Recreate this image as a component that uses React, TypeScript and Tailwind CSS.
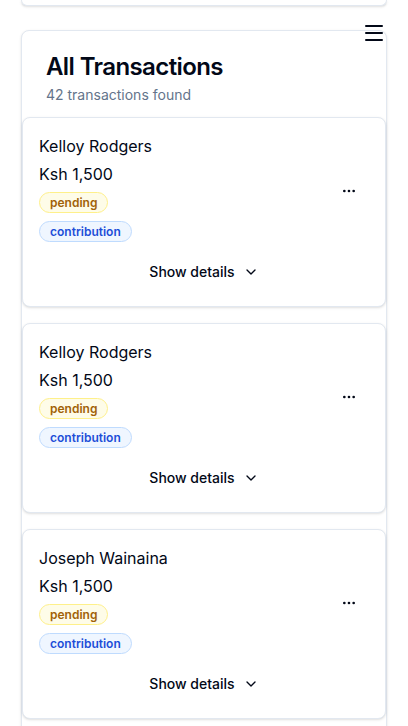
import React from "react";
import { Menu, MoreHorizontal, ChevronDown } from "lucide-react";

const txs = [
  { name: "Kelloy Rodgers", amount: "Ksh 1,500" },
  { name: "Kelloy Rodgers", amount: "Ksh 1,500" },
  { name: "Joseph Wainaina", amount: "Ksh 1,500" },
  { name: "Joseph Wainaina", amount: "Ksh 1,500" },
];

function TxCard({ name, amount }: { name: string; amount: string }) {
  return (
    <div className="rounded-lg border border-[#e2e8f0] bg-white p-4 shadow-sm">
      <div className="flex items-center justify-between">
        <div className="flex flex-col items-start">
          <div className="text-base leading-6 text-[#020817]">{name}</div>
          <div className="mt-1 text-base leading-6 text-[#020817]">{amount}</div>
          <span className="mt-1.5 inline-flex h-[21px] items-center rounded-full border border-[#fef08a] bg-[#fefce8] px-2.5 text-xs font-semibold leading-4 text-[#a16207]">
            pending
          </span>
          <span className="mt-2 inline-flex h-[21px] items-center rounded-full border border-[#bfdbfe] bg-[#eff6ff] px-2.5 text-xs font-semibold leading-4 text-[#1d4ed8]">
            contribution
          </span>
        </div>
        <button className="mt-[5px] flex h-10 w-10 items-center justify-center rounded-md text-[#020817]">
          <MoreHorizontal size={16} strokeWidth={2} />
        </button>
      </div>
      <button className="mt-3 flex h-9 w-full items-center justify-center rounded-md text-sm font-medium text-[#020817]">
        Show details
        <ChevronDown size={16} strokeWidth={2} className="ml-2" />
      </button>
    </div>
  );
}

export default function App() {
  return (
    <div
      className="relative h-[726px] overflow-hidden bg-white"
      style={{ fontFamily: "Inter, 'Noto Sans', sans-serif" }}
    >
      <div className="mx-[21px] h-[6px] rounded-b-lg border border-t-0 border-[#e2e8f0] bg-white shadow-sm" />
      <div className="mx-[21px] mt-6 rounded-lg border border-[#e2e8f0] bg-white shadow-sm">
        <div className="flex flex-col gap-1.5 px-6 pb-3 pt-6">
          <h2 className="text-2xl font-semibold leading-none tracking-tight text-[#020817]">
            All Transactions
          </h2>
          <p className="text-sm leading-5 text-[#64748b]">42 transactions found</p>
        </div>
        <div className="flex flex-col gap-4">
          {txs.map((t, i) => (
            <TxCard key={i} name={t.name} amount={t.amount} />
          ))}
        </div>
      </div>
      <button className="absolute right-[22px] top-[21px] text-[#020817]">
        <Menu size={24} strokeWidth={2} />
      </button>
    </div>
  );
}
